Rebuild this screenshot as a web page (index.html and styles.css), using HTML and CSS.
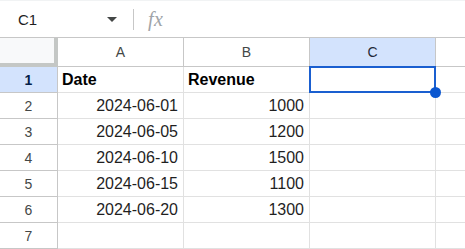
FILE: index.html
```html
<!DOCTYPE html>
<html>
<head>
<meta charset="utf-8">
<link rel="stylesheet" href="styles.css">
</head>
<body>
<div class="formula-bar">
  <div class="name-box">
    <span class="cell-ref">C1</span>
    <svg class="caret" width="10" height="5" viewBox="0 0 10 5"><path d="M0 0h10L5 5z" fill="#444746"/></svg>
  </div>
  <div class="sep"></div>
  <span class="fx">fx</span>
</div>
<div class="sheet">
  <div class="corner"></div>
  <div class="col-h">A</div>
  <div class="col-h">B</div>
  <div class="col-h col-sel">C</div>
  <div class="col-h col-rest"></div>

  <div class="row-h row-sel">1</div>
  <div class="cell bold">Date</div>
  <div class="cell bold">Revenue</div>
  <div class="cell active"><span class="handle"></span></div>
  <div class="cell rest"></div>

  <div class="row-h">2</div>
  <div class="cell num">2024-06-01</div>
  <div class="cell num">1000</div>
  <div class="cell"></div>
  <div class="cell rest"></div>

  <div class="row-h">3</div>
  <div class="cell num">2024-06-05</div>
  <div class="cell num">1200</div>
  <div class="cell"></div>
  <div class="cell rest"></div>

  <div class="row-h">4</div>
  <div class="cell num">2024-06-10</div>
  <div class="cell num">1500</div>
  <div class="cell"></div>
  <div class="cell rest"></div>

  <div class="row-h">5</div>
  <div class="cell num">2024-06-15</div>
  <div class="cell num">1100</div>
  <div class="cell"></div>
  <div class="cell rest"></div>

  <div class="row-h">6</div>
  <div class="cell num">2024-06-20</div>
  <div class="cell num">1300</div>
  <div class="cell"></div>
  <div class="cell rest"></div>

  <div class="row-h">7</div>
  <div class="cell"></div>
  <div class="cell"></div>
  <div class="cell"></div>
  <div class="cell rest"></div>
</div>
</body>
</html>
```
FILE: styles.css
```css
* { box-sizing: border-box; }
html, body {
  margin: 0;
  padding: 0;
  background: #ffffff;
  font-family: "Liberation Sans", Arial, sans-serif;
  overflow: hidden;
}
.formula-bar {
  height: 38px;
  border-top: 1px solid #f1f3f4;
  border-bottom: 1px solid #c7c7c7;
  display: flex;
  align-items: center;
}
.name-box {
  width: 133px;
  display: flex;
  align-items: center;
  padding-left: 18px;
  padding-right: 16px;
}
.cell-ref {
  font-size: 15px;
  color: #1f1f1f;
  flex: 1;
}
.caret { display: block; margin-top: 1px; }
.sep {
  width: 1px;
  height: 21px;
  background: #c7c7c7;
}
.fx {
  margin-left: 14px;
  font-family: "Liberation Serif", "Times New Roman", serif;
  font-style: italic;
  font-size: 20px;
  color: #a0a4a8;
  letter-spacing: 0.5px;
}
.sheet {
  display: grid;
  grid-template-columns: 58px 126px 126px 126px 1fr;
  grid-template-rows: 29px repeat(7, 26px);
}
.corner {
  background: #f8f9fa;
  border-right: 4px solid #c4c7c5;
  border-bottom: 4px solid #c4c7c5;
}
.col-h {
  border-right: 1px solid #c7c7c7;
  border-bottom: 1px solid #c7c7c7;
  font-size: 14px;
  color: #444746;
  display: flex;
  align-items: center;
  justify-content: center;
}
.col-sel { background: #d3e3fd; color: #1f2a3a; }
.col-rest { border-right: none; }
.row-h {
  border-right: 1px solid #c7c7c7;
  border-bottom: 1px solid #c7c7c7;
  font-size: 14px;
  color: #444746;
  display: flex;
  align-items: center;
  justify-content: center;
}
.row-sel { background: #d3e3fd; color: #041e49; font-weight: bold; }
.cell {
  border-right: 1px solid #e1e1e1;
  border-bottom: 1px solid #e1e1e1;
  font-size: 16px;
  color: #000000;
  display: flex;
  align-items: center;
  padding: 0 4px;
}
.cell.rest { border-right: none; }
.bold { font-weight: bold; }
.num { justify-content: flex-end; padding-right: 5px; color: #1f1f1f; }
.active { position: relative; }
.active::after {
  content: "";
  position: absolute;
  left: -1px;
  top: -1px;
  right: -1px;
  bottom: -1px;
  border: 2px solid #1a5fd0;
}
.handle {
  position: absolute;
  right: -6px;
  bottom: -6px;
  width: 11px;
  height: 11px;
  border-radius: 50%;
  background: #0b57d0;
  z-index: 2;
}
```
